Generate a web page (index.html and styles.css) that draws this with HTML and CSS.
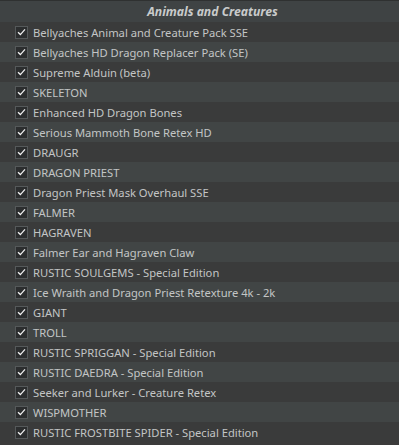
FILE: index.html
```html
<!DOCTYPE html>
<html>
<head>
<meta charset="utf-8">
<link rel="stylesheet" href="styles.css">
</head>
<body>
<div class="panel">
  <div class="header"><span class="title">Animals and Creatures</span></div>
  <ul class="list">
    <li class="row"><span class="cb"><svg viewBox="0 0 12 12"><path d="M2.2 6.2 L4.8 8.8 L9.8 3.2"/></svg></span><span class="label">Bellyaches Animal and Creature Pack SSE</span></li>
    <li class="row"><span class="cb"><svg viewBox="0 0 12 12"><path d="M2.2 6.2 L4.8 8.8 L9.8 3.2"/></svg></span><span class="label">Bellyaches HD Dragon Replacer Pack (SE)</span></li>
    <li class="row"><span class="cb"><svg viewBox="0 0 12 12"><path d="M2.2 6.2 L4.8 8.8 L9.8 3.2"/></svg></span><span class="label">Supreme Alduin (beta)</span></li>
    <li class="row"><span class="cb"><svg viewBox="0 0 12 12"><path d="M2.2 6.2 L4.8 8.8 L9.8 3.2"/></svg></span><span class="label">SKELETON</span></li>
    <li class="row"><span class="cb"><svg viewBox="0 0 12 12"><path d="M2.2 6.2 L4.8 8.8 L9.8 3.2"/></svg></span><span class="label">Enhanced HD Dragon Bones</span></li>
    <li class="row"><span class="cb"><svg viewBox="0 0 12 12"><path d="M2.2 6.2 L4.8 8.8 L9.8 3.2"/></svg></span><span class="label">Serious Mammoth Bone Retex HD</span></li>
    <li class="row"><span class="cb"><svg viewBox="0 0 12 12"><path d="M2.2 6.2 L4.8 8.8 L9.8 3.2"/></svg></span><span class="label">DRAUGR</span></li>
    <li class="row"><span class="cb"><svg viewBox="0 0 12 12"><path d="M2.2 6.2 L4.8 8.8 L9.8 3.2"/></svg></span><span class="label">DRAGON PRIEST</span></li>
    <li class="row"><span class="cb"><svg viewBox="0 0 12 12"><path d="M2.2 6.2 L4.8 8.8 L9.8 3.2"/></svg></span><span class="label">Dragon Priest Mask Overhaul SSE</span></li>
    <li class="row"><span class="cb"><svg viewBox="0 0 12 12"><path d="M2.2 6.2 L4.8 8.8 L9.8 3.2"/></svg></span><span class="label">FALMER</span></li>
    <li class="row"><span class="cb"><svg viewBox="0 0 12 12"><path d="M2.2 6.2 L4.8 8.8 L9.8 3.2"/></svg></span><span class="label">HAGRAVEN</span></li>
    <li class="row"><span class="cb"><svg viewBox="0 0 12 12"><path d="M2.2 6.2 L4.8 8.8 L9.8 3.2"/></svg></span><span class="label">Falmer Ear and Hagraven Claw</span></li>
    <li class="row"><span class="cb"><svg viewBox="0 0 12 12"><path d="M2.2 6.2 L4.8 8.8 L9.8 3.2"/></svg></span><span class="label">RUSTIC SOULGEMS - Special Edition</span></li>
    <li class="row"><span class="cb"><svg viewBox="0 0 12 12"><path d="M2.2 6.2 L4.8 8.8 L9.8 3.2"/></svg></span><span class="label">Ice Wraith and Dragon Priest Retexture 4k - 2k</span></li>
    <li class="row"><span class="cb"><svg viewBox="0 0 12 12"><path d="M2.2 6.2 L4.8 8.8 L9.8 3.2"/></svg></span><span class="label">GIANT</span></li>
    <li class="row"><span class="cb"><svg viewBox="0 0 12 12"><path d="M2.2 6.2 L4.8 8.8 L9.8 3.2"/></svg></span><span class="label">TROLL</span></li>
    <li class="row"><span class="cb"><svg viewBox="0 0 12 12"><path d="M2.2 6.2 L4.8 8.8 L9.8 3.2"/></svg></span><span class="label">RUSTIC SPRIGGAN - Special Edition</span></li>
    <li class="row"><span class="cb"><svg viewBox="0 0 12 12"><path d="M2.2 6.2 L4.8 8.8 L9.8 3.2"/></svg></span><span class="label">RUSTIC DAEDRA - Special Edition</span></li>
    <li class="row"><span class="cb"><svg viewBox="0 0 12 12"><path d="M2.2 6.2 L4.8 8.8 L9.8 3.2"/></svg></span><span class="label">Seeker and Lurker - Creature Retex</span></li>
    <li class="row"><span class="cb"><svg viewBox="0 0 12 12"><path d="M2.2 6.2 L4.8 8.8 L9.8 3.2"/></svg></span><span class="label">WISPMOTHER</span></li>
    <li class="row"><span class="cb"><svg viewBox="0 0 12 12"><path d="M2.2 6.2 L4.8 8.8 L9.8 3.2"/></svg></span><span class="label">RUSTIC FROSTBITE SPIDER - Special Edition</span></li>
  </ul>
</div>
</body>
</html>
```
FILE: styles.css
```css
html, body {
  margin: 0;
  padding: 0;
  background: #3b3b3b;
  overflow: hidden;
}
.panel {
  width: 399px;
  height: 445px;
  background: #3b3b3b;
  font-family: "Noto Sans", "Open Sans", sans-serif;
}
.header {
  height: 21px;
  border-top: 1px solid #2f3131;
  background: #3f4344;
  display: flex;
  align-items: center;
  justify-content: center;
  padding-left: 26px;
}
.title {
  font-weight: bold;
  font-style: italic;
  font-size: 12.2px;
  color: #c9cbcb;
}
.list {
  list-style: none;
  margin: 0;
  padding: 0;
}
.row {
  height: 20px;
  display: flex;
  align-items: center;
  padding-left: 15px;
  background: #3a3b3b;
}
.row:nth-child(even) {
  background: #414545;
}
.cb {
  width: 11px;
  height: 11px;
  border: 1px solid #55595a;
  background: #2c2e2f;
  display: flex;
  align-items: center;
  justify-content: center;
  margin-right: 5px;
  flex: none;
}
.cb svg {
  width: 12px;
  height: 12px;
  fill: none;
  stroke: #f2f2f2;
  stroke-width: 1.4;
}
.label {
  font-size: 11.2px;
  color: #c3c5c5;
  white-space: nowrap;
}
```
